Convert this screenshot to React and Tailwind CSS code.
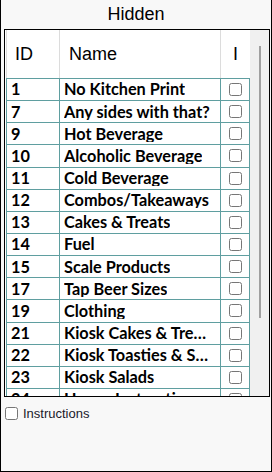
import React from 'react';

const rows = [
    { id: 1, name: 'No Kitchen Print' },
    { id: 7, name: 'Any sides with that?' },
    { id: 9, name: 'Hot Beverage' },
    { id: 10, name: 'Alcoholic Beverage' },
    { id: 11, name: 'Cold Beverage' },
    { id: 12, name: 'Combos/Takeaways' },
    { id: 13, name: 'Cakes & Treats' },
    { id: 14, name: 'Fuel' },
    { id: 15, name: 'Scale Products' },
    { id: 17, name: 'Tap Beer Sizes' },
    { id: 19, name: 'Clothing' },
    { id: 21, name: 'Kiosk Cakes & Treats' },
    { id: 22, name: 'Kiosk Toasties & Sandwiches' },
    { id: 23, name: 'Kiosk Salads' },
    { id: 24, name: 'Happy Instructions' },
];

const App = () => {
    return (
        <div className="w-[272px] h-[472px] bg-[#f8f8f8] border-x border-b border-black flex flex-col font-['Liberation_Sans',Arial,sans-serif]">
            {/* Title */}
            <div className="h-[29px] shrink-0 flex justify-center text-[18px] text-black leading-none pt-[5px]">
                Hidden
            </div>

            {/* Table panel */}
            <div className="ml-[3px] mr-[1px] h-[368px] shrink-0 border border-black bg-white flex overflow-hidden">
                <div className="flex-1 flex flex-col overflow-hidden pl-[1px]">
                    {/* Header */}
                    <div className="h-[49px] shrink-0 flex border-b border-[#5f9ea0] text-[18px] text-black">
                        <div className="w-[53px] border-l border-[#dcdcdc] pl-[8px] flex items-center">ID</div>
                        <div className="w-[161px] border-l border-[#dcdcdc] pl-[9px] flex items-center">Name</div>
                        <div className="flex-1 border-l border-[#dcdcdc] flex items-center justify-center">I</div>
                    </div>
                    {/* Rows */}
                    {rows.map((row) => (
                        <div key={row.id} className="h-[22.15px] shrink-0 flex border-b border-[#5f9ea0] font-['Lato',sans-serif] font-bold text-[16.3px] text-black leading-none">
                            <div className="w-[53px] border-l border-[#5f9ea0] pl-[4px] flex items-center">{row.id}</div>
                            <div className="w-[161px] border-l border-[#5f9ea0] pl-[4px] pr-[8px] flex items-center overflow-hidden">
                                <span className="truncate">{row.name}</span>
                            </div>
                            <div className="flex-1 border-l border-r border-[#5f9ea0] flex items-center justify-center">
                                <input type="checkbox" className="w-[13px] h-[13px] m-0" />
                            </div>
                        </div>
                    ))}
                </div>
                {/* Scrollbar */}
                <div className="w-[19px] shrink-0 bg-[#f0f0f0] flex justify-center pt-[16px]">
                    <div className="w-[2px] h-[272px] bg-[#a0a0a0]"></div>
                </div>
            </div>

            {/* Footer */}
            <label className="flex items-center gap-[5px] pl-[4px] pt-[7px] text-[13px] text-[#1a1a2a]">
                <input type="checkbox" className="w-[13px] h-[13px] m-0" />
                Instructions
            </label>
        </div>
    );
};

export default App;
